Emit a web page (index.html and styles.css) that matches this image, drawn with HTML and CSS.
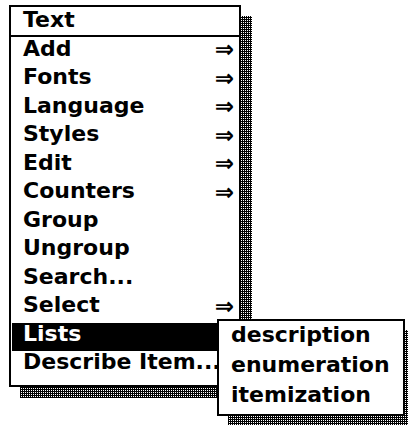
FILE: index.html
```html
<!DOCTYPE html>
<html lang="en">
<head>
    <meta charset="UTF-8">
    <meta name="viewport" content="width=device-width, initial-scale=1.0">
    <title>Text Menu</title>
    <link rel="stylesheet" href="styles.css">
</head>
<body>
    <div class="menu main-menu">
        <div class="menu-title">Text</div>
        <ul class="menu-items">
            <li class="menu-item"><span>Add</span><span class="arrow">⇒</span></li>
            <li class="menu-item"><span>Fonts</span><span class="arrow">⇒</span></li>
            <li class="menu-item"><span>Language</span><span class="arrow">⇒</span></li>
            <li class="menu-item"><span>Styles</span><span class="arrow">⇒</span></li>
            <li class="menu-item"><span>Edit</span><span class="arrow">⇒</span></li>
            <li class="menu-item"><span>Counters</span><span class="arrow">⇒</span></li>
            <li class="menu-item"><span>Group</span></li>
            <li class="menu-item"><span>Ungroup</span></li>
            <li class="menu-item"><span>Search...</span></li>
            <li class="menu-item"><span>Select</span><span class="arrow">⇒</span></li>
            <li class="menu-item selected"><span>Lists</span></li>
            <li class="menu-item"><span>Describe Item...</span></li>
        </ul>

        <!-- submenu for Lists -->
        <div class="menu sub-menu">
            <ul class="menu-items">
                <li class="menu-item">description</li>
                <li class="menu-item">enumeration</li>
                <li class="menu-item">itemization</li>
            </ul>
        </div>
    </div>
</body>
</html>
```

FILE: styles.css
```css
html {
    background: #fff;
}
body {
    margin: 0;
    padding: 5px 0 0 9px;
    font-family: "DejaVu Sans", sans-serif;
    font-weight: bold;
    font-size: 22px;
    color: #000;
    overflow: hidden;
    height: 425px;
    box-sizing: border-box;
}
.menu {
    position: relative;
    background: #fff;
    border: 2px solid #000;
    box-sizing: border-box;
}
/* dithered drop shadow */
.menu::after {
    content: "";
    position: absolute;
    top: 9px;
    left: 9px;
    right: -13px;
    bottom: -13px;
    z-index: -1;
    background-image: conic-gradient(#fff 0 25%, #000 0 100%);
    background-size: 2px 2px;
}
.main-menu {
    width: 232px;
}
.menu-title {
    line-height: 22px;
    padding: 2px 12px 4px;
    border-bottom: 2px solid #000;
}
.menu-items {
    list-style: none;
    margin: 0;
    padding: 0.5px 0 5.5px;
}
.menu-item {
    display: flex;
    justify-content: space-between;
    align-items: center;
    height: 22px;
    margin: 0 1px;
    padding: 0 4px 6.5px 11px;
    line-height: 22px;
    white-space: nowrap;
}
.menu-item.selected {
    background: #000;
    color: #fff;
}
.arrow {
    font-size: 23px;
    line-height: 22px;
    padding-top: 1px;
}
.sub-menu {
    position: absolute;
    left: 206px;
    top: 312px;
    width: 188px;
    height: 97px;
}
.sub-menu .menu-items {
    padding: 3px 0 0;
}
.sub-menu .menu-item {
    padding-bottom: 8px;
}
```
